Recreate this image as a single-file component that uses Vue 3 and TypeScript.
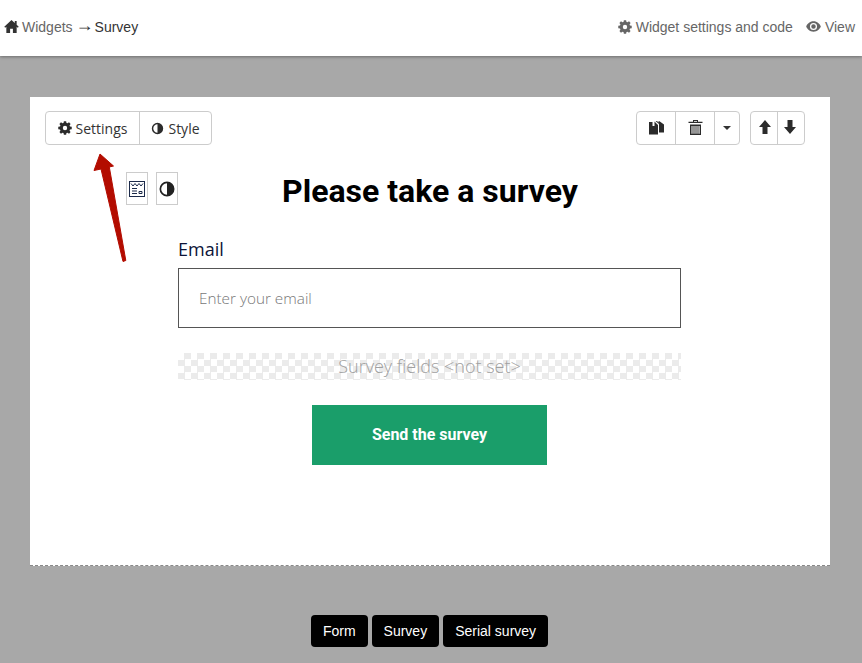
<template>
  <div class="page">
    <header class="topbar">
      <div class="crumbs">
        <svg class="ico home" viewBox="0 0 16 16"><path d="M8 1 0.3 8.2 1.3 9.2 2.5 8.2V15H6.5V10.5H9.5V15H13.5V8.2L14.7 9.2 15.7 8.2 13.5 6.1V2H11.5V4.2Z" /></svg>
        <a class="muted">Widgets</a>
        <span class="arrow-char">→</span>
        <span>Survey</span>
      </div>
      <nav class="top-links">
        <a class="muted">
          <svg class="ico" viewBox="0 0 16 16"><use href="#cog" /></svg>
          Widget settings and code
        </a>
        <a class="muted">
          <svg class="ico eye" viewBox="0 0 16 16"><path fill-rule="evenodd" d="M8 2.5C4 2.5 1.2 5.4 0.2 8 1.2 10.6 4 13.5 8 13.5S14.8 10.6 15.8 8C14.8 5.4 12 2.5 8 2.5ZM8 4.2A3.8 3.8 0 1 1 8 11.8 3.8 3.8 0 0 1 8 4.2ZM8 5.6A2.4 2.4 0 1 0 8 10.4 2.4 2.4 0 0 0 8 5.6Z" /></svg>
          View
        </a>
      </nav>
    </header>

    <svg class="defs" width="0" height="0">
      <defs>
        <path id="cog" fill-rule="evenodd" d="M6.7 0.2H9.3L9.7 2.2 10.9 2.7 12.6 1.5 14.4 3.3 13.2 5 13.7 6.2 15.7 6.6V9.4L13.7 9.8 13.2 11 14.4 12.7 12.6 14.5 10.9 13.3 9.7 13.8 9.3 15.8H6.7L6.3 13.8 5.1 13.3 3.4 14.5 1.6 12.7 2.8 11 2.3 9.8 0.3 9.4V6.6L2.3 6.2 2.8 5 1.6 3.3 3.4 1.5 5.1 2.7 6.3 2.2ZM8 5.5A2.5 2.5 0 1 0 8 10.5 2.5 2.5 0 0 0 8 5.5Z" />
      </defs>
    </svg>

    <main class="card">
      <div class="toolbar">
        <div class="btn-group">
          <button class="tool-btn text-btn settings-btn">
            <svg class="ico dark" viewBox="0 0 16 16"><use href="#cog" /></svg>
            Settings
          </button>
          <button class="tool-btn text-btn style-btn">
            <svg class="ico dark contrast" viewBox="0 0 16 16"><path fill-rule="evenodd" d="M8 1A7 7 0 1 0 8 15 7 7 0 0 0 8 1ZM8 2.8V13.2A5.2 5.2 0 0 1 8 2.8Z" /></svg>
            Style
          </button>
        </div>
        <div class="toolbar-right">
          <div class="btn-group">
            <button class="tool-btn copy-btn">
              <svg class="ico dark big" viewBox="0 0 15 14"><path d="M0 1.5H3.5V5.5H5.5V1L9 4.5V14H0ZM6.5 0.5H8L9.5 2V0.8H10.5L15 4V12H10V3.5L6.5 0.5Z" /></svg>
            </button>
            <button class="tool-btn trash-btn">
              <svg class="ico dark big" viewBox="0 0 14 15"><path fill-rule="evenodd" d="M4.5 0H9.5V1.8H14V3H0V1.8H4.5ZM5.5 1V1.8H8.5V1ZM1.5 4.5H12.5V15H1.5ZM3 6V13.8H4V6ZM5 6V13.8H6V6ZM7 6V13.8H8V6ZM9 6V13.8H10V6ZM10.8 6V13.8H11.4V6Z" /></svg>
            </button>
            <button class="tool-btn caret-btn"><span class="caret"></span></button>
          </div>
          <div class="btn-group">
            <button class="tool-btn move-btn">
              <svg class="ico dark move-ico" viewBox="0 0 12 14"><path d="M6 0 12 7H8.5V14H3.5V7H0Z" /></svg>
            </button>
            <button class="tool-btn move-btn">
              <svg class="ico dark move-ico" viewBox="0 0 12 14"><path d="M6 14 0 7H3.5V0H8.5V7H12Z" /></svg>
            </button>
          </div>
        </div>
      </div>

      <div class="title-row">
        <div class="mini-tools">
          <button class="mini-btn">
            <svg class="mini-ico" viewBox="0 0 16 16" fill="none" stroke="#1c2a4a" stroke-width="1"><rect x="0.5" y="0.5" width="15" height="15" /><path d="M2 2.5 4 5 6 2.5 8 5 10 2.5 12 5 14 2.5M3 7.5H8M3 10H8M3 12.5H8M10 10.5H13V12.5H10Z" /></svg>
          </button>
          <button class="mini-btn">
            <svg class="mini-ico" viewBox="0 0 16 16"><path fill="#222" fill-rule="evenodd" d="M8 0.5A7.5 7.5 0 1 0 8 15.5 7.5 7.5 0 0 0 8 0.5ZM8 2.2V13.8A5.8 5.8 0 0 1 8 2.2Z" /></svg>
          </button>
        </div>
        <h1>Please take a survey</h1>
      </div>

      <form class="survey" @submit.prevent>
        <label class="field-label" for="email">Email</label>
        <input id="email" class="email" type="text" placeholder="Enter your email" />
        <div class="fields-empty">Survey fields &lt;not set&gt;</div>
        <button class="send" type="submit">Send the survey</button>
      </form>

      <!-- annotation drawn over the card -->
      <svg class="pointer" viewBox="0 0 50 140" width="50" height="140">
        <path d="M13 22 L26.5 34 L22.3 35 L38.8 128.5 L36 129.5 L14 37 L7 38.5 Z" fill="#b30c00" stroke="#b30c00" stroke-width="1" stroke-linejoin="round" />
      </svg>
    </main>

    <footer class="tabs">
      <button v-for="tab in tabs" :key="tab" class="tab">{{ tab }}</button>
    </footer>
  </div>
</template>

<script setup lang="ts">
const tabs: string[] = ['Form', 'Survey', 'Serial survey']
</script>

<style>
html, body {
  margin: 0;
  background: #a8a8a8;
}
</style>

<style scoped>
.page {
  width: 862px;
  height: 663px;
  overflow: hidden;
  background: #a8a8a8;
  font-family: "Liberation Sans", Arial, sans-serif;
  font-size: 14px;
  color: #333;
}

.defs {
  position: absolute;
}

.topbar {
  height: 56px;
  box-sizing: border-box;
  padding: 0 7px 2px 4px;
  background: #fff;
  box-shadow: 0 1px 3px rgba(0, 0, 0, 0.35);
  display: flex;
  align-items: center;
  justify-content: space-between;
  position: relative;
}

.crumbs {
  display: flex;
  align-items: center;
  gap: 3px;
  color: #333;
}

.arrow-char {
  width: 15px;
  margin: 0 1px 4px 0;
  font-size: 18px;
  line-height: 14px;
  text-align: center;
}

.muted {
  color: #666;
}

.ico {
  width: 14px;
  height: 14px;
  fill: currentColor;
  flex: none;
}

.home {
  width: 15px;
  height: 15px;
  fill: #333;
  margin-top: -1px;
}

.eye {
  width: 15px;
  height: 15px;
  margin-top: -1px;
}

.top-links {
  display: flex;
  gap: 13px;
}

.top-links a {
  display: flex;
  align-items: center;
  gap: 4px;
}

.card {
  position: relative;
  width: 800px;
  height: 469px;
  box-sizing: border-box;
  margin: 41px 0 0 30px;
  padding: 14px 25px 0 15px;
  background: #fff;
  border-bottom: 1px dashed #888;
}

.toolbar {
  display: flex;
  justify-content: space-between;
}

.toolbar-right {
  display: flex;
  gap: 10px;
}

.btn-group {
  display: flex;
  height: 34px;
  box-sizing: border-box;
  border: 1px solid #ccc;
  border-radius: 4px;
  background: #fff;
}

.tool-btn {
  display: flex;
  align-items: center;
  justify-content: center;
  padding: 0;
  border: 0;
  border-left: 1px solid #ccc;
  background: none;
  color: #333;
}

.tool-btn:first-child {
  border-left: 0;
}

.text-btn {
  gap: 4px;
  font-family: "Open Sans", sans-serif;
  font-size: 14px;
}

.settings-btn {
  width: 93px;
}

.style-btn {
  width: 72px;
}

.copy-btn {
  width: 38px;
}

.trash-btn {
  width: 39px;
}

.caret-btn {
  width: 25px;
}

.move-btn {
  width: 27px;
}

.move-btn:first-child {
  width: 26px;
}

.dark {
  fill: #2b2b2b;
}

.big {
  width: 15px;
  height: 15px;
  margin-top: -2px;
}

.move-ico {
  width: 12px;
  height: 14px;
  margin-top: -2px;
}

.move-btn:first-child .move-ico {
  margin-left: 2px;
}

.move-btn:last-child .move-ico {
  margin-right: 2px;
}

.contrast {
  width: 13px;
  height: 13px;
}

.caret {
  width: 0;
  height: 0;
  border-top: 4px solid #333;
  border-left: 4px solid transparent;
  border-right: 4px solid transparent;
}

.title-row {
  position: relative;
  margin-top: 16px;
  height: 60px;
  display: flex;
  justify-content: center;
}

.mini-tools {
  position: absolute;
  left: 81px;
  top: 11px;
  display: flex;
  gap: 8px;
}

.mini-btn {
  width: 22px;
  height: 33px;
  box-sizing: border-box;
  padding: 0;
  border: 1px solid #ccc;
  background: #fff;
  display: flex;
  align-items: center;
  justify-content: center;
}

.mini-ico {
  width: 16px;
  height: 16px;
}

h1 {
  margin: 0;
  padding-left: 10px;
  font-family: Roboto, sans-serif;
  font-size: 32px;
  font-weight: 700;
  line-height: 60px;
  color: #000;
}

.survey {
  width: 503px;
  margin: 16px 0 0 133px;
  display: flex;
  flex-direction: column;
}

.field-label {
  font-family: "Open Sans", sans-serif;
  font-size: 18px;
  line-height: 24px;
  color: #0c1438;
  margin-bottom: 7px;
}

.email {
  height: 60px;
  box-sizing: border-box;
  padding: 0 20px;
  border: 1px solid #555;
  border-radius: 0;
  outline: none;
  font-family: "Open Sans", sans-serif;
  font-size: 15.3px;
  font-weight: 300;
  color: #333;
}

.email::placeholder {
  color: #777;
  opacity: 1;
}

.fields-empty {
  margin-top: 25px;
  height: 27px;
  line-height: 27px;
  text-align: center;
  font-family: "Open Sans", sans-serif;
  font-size: 18px;
  font-weight: 300;
  color: #a0a0a0;
  background-color: #fff;
  background-image: conic-gradient(#ebebeb 25%, #fff 0 50%, #ebebeb 0 75%, #fff 0);
  background-size: 13px 13px;
}

.send {
  align-self: center;
  width: 235px;
  height: 60px;
  margin-top: 25px;
  padding: 0 0 2px;
  border: 0;
  background: #1a9e6a;
  color: #fff;
  font-family: Roboto, sans-serif;
  font-size: 16px;
  font-weight: 700;
}

.pointer {
  position: absolute;
  left: 57px;
  top: 35px;
}

.tabs {
  margin-top: 49px;
  display: flex;
  justify-content: center;
  gap: 4px;
  padding-right: 3px;
}

.tab {
  height: 32px;
  padding: 0 12px;
  border: 0;
  border-radius: 4px;
  background: #000;
  color: #fff;
  font-family: "Liberation Sans", Arial, sans-serif;
  font-size: 14px;
}
</style>
